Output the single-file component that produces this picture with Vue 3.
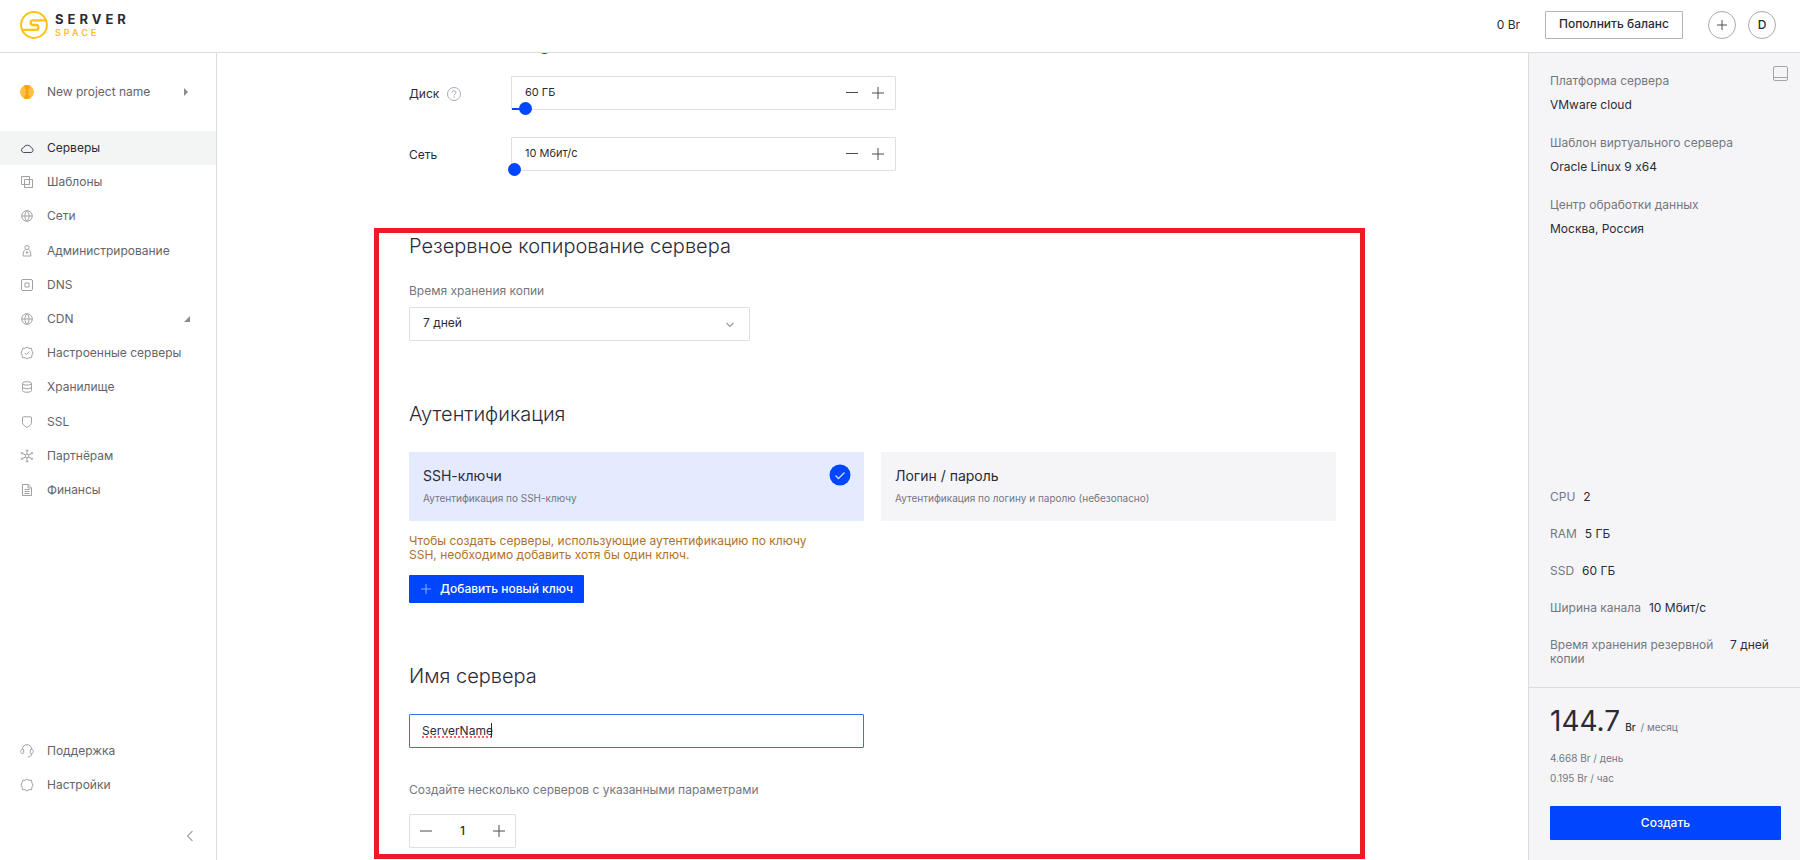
<script setup>
import { ref } from 'vue'

const icons = {
  cloud: ['M3.500 11.500h7.500a2.400 2.400 0 0 0 .3-4.700A4.200 4.200 0 0 0 3.600 6.600A2.500 2.500 0 0 0 3.500 11.500z'],
  layers: ['M1.500 1.500h8v8h-8z', 'M4.500 9.500v3h8v-8h-3', 'M4.500 4.500h5v5h-5z'],
  globe: ['M7 1.700a5.300 5.300 0 1 0 0 10.600a5.300 5.300 0 1 0 0-10.600z', 'M1.700 7h10.600', 'M7 1.700C4.300 4 4.300 10 7 12.300', 'M7 1.700C9.700 4 9.700 10 7 12.300'],
  admin: ['M7 1.500a2.100 2.100 0 1 0 0 4.200a2.100 2.100 0 1 0 0-4.200z', 'M5.500 5.500C3.500 6.700 3 9 3.200 12h7.600C11 9 10.500 6.700 8.500 5.500', 'M7 7v3M5.800 8.500h2.400'],
  dns: ['M3 1.500h8a1.500 1.500 0 0 1 1.500 1.500v8a1.500 1.500 0 0 1-1.500 1.500H3A1.500 1.500 0 0 1 1.500 11V3A1.500 1.500 0 0 1 3 1.500z', 'M5 5h4v4H5z'],
  badge: ['M7 1l1.900 1.300 2.600 0 .4 2.500L13 7l-1.100 2.200-.4 2.500-2.600 0L7 13l-1.900-1.300-2.600 0-.4-2.500L1 7l1.100-2.200.4-2.500 2.600 0z', 'M4.800 7l1.600 1.500L9.200 5.700'],
  disk: ['M2.500 3.400c0-2.200 9-2.200 9 0s-9 2.200-9 0z', 'M2.500 3.400v7.200c0 2.200 9 2.200 9 0V3.400', 'M2.500 7c0 2.200 9 2.200 9 0'],
  shield: ['M3.500 1.800h7q1 0 1 1v4.700c0 2.200-2 3.600-4.500 4.900c-2.500-1.300-4.500-2.700-4.500-4.900V2.800q0-1 1-1z'],
  partner: [
    'M7 5.200a1.800 1.800 0 1 0 0 3.600a1.800 1.800 0 1 0 0-3.600z',
    'M7 2.500v2.700M7 8.800v2.700M5.500 6L2.800 4.700M8.500 6l2.700-1.300M5.500 8L2.800 9.300M8.500 8l2.700 1.300',
    'M7 .8a.8.800 0 1 0 0 1.600a.8.800 0 1 0 0-1.600zM7 11.600a.8.800 0 1 0 0 1.600a.8.800 0 1 0 0-1.600z',
    'M2 3.400a.8.800 0 1 0 0 1.600a.8.800 0 1 0 0-1.600zM12 3.400a.8.800 0 1 0 0 1.600a.8.800 0 1 0 0-1.600zM2 9a.8.800 0 1 0 0 1.600a.8.800 0 1 0 0-1.600zM12 9a.8.800 0 1 0 0 1.600a.8.800 0 1 0 0-1.600z',
  ],
  file: ['M2.500 1.500h5.700l3.300 3.300v7.700h-9z', 'M8 1.500v3.500h3.500', 'M4.500 6.500h5M4.500 8.500h5M4.500 10.500h5'],
  support: ['M2.300 5.300C2.500 2.400 4.500.7 7 .7s4.500 1.700 4.700 4.600', 'M2.400 5.200h.5c.6 0 .8.400.8.800v2.600c0 .6-.3.900-.8.900h-.5C1.300 9.500.700 8.600.700 7.400s.6-2.200 1.700-2.200z', 'M11.600 5.200h-.5c-.6 0-.8.400-.8.800v2.600c0 .6.300.9.800.9h.5c1.100 0 1.700-.9 1.700-2.100s-.6-2.200-1.700-2.200z', 'M11.700 9.500c0 2-1.200 3.300-4 3.500'],
  gear: ['M7 1l1.900 1.300 2.600 0 .4 2.500L13 7l-1.100 2.200-.4 2.500-2.600 0L7 13l-1.900-1.300-2.600 0-.4-2.500L1 7l1.100-2.200.4-2.500 2.600 0z'],
}

const nav = [
  { icon: 'cloud', label: 'Серверы', active: true },
  { icon: 'layers', label: 'Шаблоны' },
  { icon: 'globe', label: 'Сети' },
  { icon: 'admin', label: 'Администрирование' },
  { icon: 'dns', label: 'DNS' },
  { icon: 'globe', label: 'CDN', expandable: true },
  { icon: 'badge', label: 'Настроенные серверы' },
  { icon: 'disk', label: 'Хранилище' },
  { icon: 'shield', label: 'SSL' },
  { icon: 'partner', label: 'Партнёрам' },
  { icon: 'file', label: 'Финансы' },
]
const bottomNav = [
  { icon: 'support', label: 'Поддержка' },
  { icon: 'gear', label: 'Настройки' },
]

const memory = ref(8)
const resources = ref([
  { id: 'disk', label: 'Диск', help: true, text: '60 ГБ', value: 3 },
  { id: 'net', label: 'Сеть', help: false, text: '10 Мбит/с', value: 0 },
])

const auth = ref('ssh')
const authOptions = [
  { id: 'ssh', title: 'SSH-ключи', note: 'Аутентификация по SSH-ключу' },
  { id: 'password', title: 'Логин / пароль', note: 'Аутентификация по логину и паролю (небезопасно)' },
]

const serverName = ref('ServerName')
const count = ref(1)

const platform = [
  { label: 'Платформа сервера', value: 'VMware cloud' },
  { label: 'Шаблон виртуального сервера', value: 'Oracle Linux 9 x64' },
  { label: 'Центр обработки данных', value: 'Москва, Россия' },
]
const specs = [
  { label: 'CPU', value: '2' },
  { label: 'RAM', value: '5 ГБ' },
  { label: 'SSD', value: '60 ГБ' },
  { label: 'Ширина канала', value: '10 Мбит/с' },
  { label: 'Время хранения резервной копии', value: '7 дней' },
]
</script>

<template>
  <div class="page">
    <header class="header">
      <a href="#" class="logo" aria-label="Serverspace">
        <svg class="logo-mark" viewBox="0 0 28 28" fill="none" stroke="#ffc20e">
          <circle cx="14" cy="14" r="12.900" stroke-width="2" />
          <path d="M26 9.400H13a2.300 2.300 0 0 0 0 4.600h3a2.400 2.400 0 0 1 0 4.800H2.500" stroke-width="2.300" />
        </svg>
        <span class="logo-text">
          <span class="logo-top">SERVER</span>
          <span class="logo-bottom">SPACE</span>
        </span>
      </a>
      <div class="account">
        <span class="balance">0 Br</span>
        <button type="button" class="topup">Пополнить баланс</button>
        <div class="round-buttons">
          <button type="button" class="round" aria-label="Создать">
            <svg viewBox="0 0 12 12" class="glyph"><path d="M6 1v10M1 6h10" /></svg>
          </button>
          <button type="button" class="round">D</button>
        </div>
      </div>
    </header>

    <div class="body">
      <aside class="sidebar">
        <button type="button" class="project">
          <svg class="project-icon" viewBox="0 0 14 14">
            <circle cx="7" cy="7" r="7" fill="#fdc04d" />
            <path d="M7 7L3.500 1a7 7 0 0 1 7 0zM7 7l3.500 6a7 7 0 0 1-7 0z" fill="#fba40a" />
            <circle cx="7" cy="7" r="1.800" fill="#fba40a" />
          </svg>
          <span>New project name</span>
          <svg class="project-arrow" viewBox="0 0 8 8"><path d="M2 0l4 4-4 4z" fill="#8b8b8b" /></svg>
        </button>

        <nav class="nav">
          <a v-for="item in nav" :key="item.label" href="#" class="nav-item" :class="{ active: item.active }">
            <svg class="nav-icon" viewBox="0 0 14 14">
              <path v-for="d in icons[item.icon]" :key="d" :d="d" />
            </svg>
            <span>{{ item.label }}</span>
            <svg v-if="item.expandable" class="nav-corner" viewBox="0 0 6 6"><path d="M6 0v6H0z" fill="#8b8b8b" /></svg>
          </a>
        </nav>

        <nav class="nav-bottom">
          <a v-for="item in bottomNav" :key="item.label" href="#" class="nav-item">
            <svg class="nav-icon" viewBox="0 0 14 14">
              <path v-for="d in icons[item.icon]" :key="d" :d="d" />
            </svg>
            <span>{{ item.label }}</span>
          </a>
        </nav>
        <button type="button" class="collapse" aria-label="Свернуть меню">
          <svg viewBox="0 0 8 12"><path d="M6.500 1L1.500 6l5 5" fill="none" stroke="#a6a6a6" stroke-width="1.200" /></svg>
        </button>
      </aside>

      <main class="main">
        <div class="content">
          <div class="slider-top">
            <input v-model="memory" type="range" class="range" aria-label="RAM" :style="{ '--fill': memory + '%' }" />
          </div>

          <div class="resources">
            <div v-for="r in resources" :key="r.id" class="resource">
              <label :for="r.id" class="resource-label">
                {{ r.label }}
                <svg v-if="r.help" class="help" viewBox="0 0 14 14" fill="none">
                  <circle cx="7" cy="7" r="6.500" stroke="#a9acb5" />
                  <path d="M5.200 5.500c.1-2.300 3.700-2.200 3.700 0c0 1.400-1.800 1.400-1.800 2.800" stroke="#9aa3c4" />
                  <circle cx="7.100" cy="10.100" r=".700" fill="#9aa3c4" />
                </svg>
              </label>
              <div class="resource-box">
                <input :id="r.id" v-model="r.text" type="text" class="resource-value" />
                <button type="button" class="step" aria-label="Меньше">
                  <svg viewBox="0 0 12 12" class="glyph"><path d="M0 5.500h12" /></svg>
                </button>
                <button type="button" class="step" aria-label="Больше">
                  <svg viewBox="0 0 12 12" class="glyph"><path d="M6 0v12M0 6h12" /></svg>
                </button>
                <input v-model="r.value" type="range" class="range box-range" :aria-label="r.label" :style="{ '--fill': r.value + '%' }" />
              </div>
            </div>
          </div>

          <div class="framed">
            <section class="section">
              <h2>Резервное копирование сервера</h2>
              <label for="keep" class="field-label">Время хранения копии</label>
              <div class="select-wrap">
                <select id="keep" class="select">
                  <option>7 дней</option>
                </select>
                <svg class="select-arrow" viewBox="0 0 8 6"><path d="M.5 1L4 4.500 7.500 1" fill="none" stroke="#9a9a9a" stroke-width="1.200" /></svg>
              </div>
            </section>

            <section class="section auth">
              <h2>Аутентификация</h2>
              <div class="cards">
                <button
                  v-for="o in authOptions"
                  :key="o.id"
                  type="button"
                  class="card"
                  :class="{ selected: auth === o.id }"
                  @click="auth = o.id"
                >
                  <span class="card-title">{{ o.title }}</span>
                  <span class="card-note">{{ o.note }}</span>
                  <svg v-if="auth === o.id" class="card-check" viewBox="0 0 22 22">
                    <circle cx="11" cy="11" r="10.500" fill="#0045ff" />
                    <path d="M6.500 11.500l3 3L15.500 8.500" fill="none" stroke="#cfdcff" stroke-width="1.300" />
                  </svg>
                </button>
              </div>
              <p class="warning">Чтобы создать серверы, использующие аутентификацию по ключу SSH, необходимо добавить хотя бы один ключ.</p>
              <button type="button" class="add-key">
                <svg viewBox="0 0 10 10" class="add-plus"><path d="M5 0v10M0 5h10" /></svg>
                Добавить новый ключ
              </button>
            </section>

            <section class="section name">
              <h2 id="name-title">Имя сервера</h2>
              <div class="name-wrap">
                <input v-model="serverName" type="text" class="name-input" spellcheck="false" aria-labelledby="name-title" />
                <span class="spelling" aria-hidden="true"></span>
                <span class="caret" aria-hidden="true"></span>
              </div>
              <label for="count" class="field-label count-label">Создайте несколько серверов с указанными параметрами</label>
              <div class="counter">
                <button type="button" class="step" aria-label="Меньше" @click="count = Math.max(1, count - 1)">
                  <svg viewBox="0 0 12 12" class="glyph"><path d="M0 6h12" /></svg>
                </button>
                <input id="count" v-model="count" type="text" class="count" />
                <button type="button" class="step" aria-label="Больше" @click="count++">
                  <svg viewBox="0 0 12 12" class="glyph"><path d="M6 0v12M0 6h12" /></svg>
                </button>
              </div>
            </section>
            <div class="frame" aria-hidden="true"></div>
          </div>
        </div>
      </main>

      <aside class="summary">
        <button type="button" class="dock" aria-label="Переместить панель">
          <svg viewBox="0 0 15 15"><path d="M2 .5h11q1.500 0 1.500 1.500v11q0 1.500-1.500 1.500H2Q.5 14.500.5 13V2Q.5.500 2 .500zM.5 11.500h14" fill="none" stroke="#a4a5a8" /></svg>
        </button>
        <dl class="platform">
          <div v-for="p in platform" :key="p.label">
            <dt>{{ p.label }}</dt>
            <dd>{{ p.value }}</dd>
          </div>
        </dl>
        <dl class="specs">
          <div v-for="s in specs" :key="s.label" class="spec">
            <dt>{{ s.label }}</dt>
            <dd>{{ s.value }}</dd>
          </div>
        </dl>
        <div class="price">
          <div class="price-main">
            <span class="amount">144.7</span>
            <span class="currency">Br</span>
            <span class="period">/ месяц</span>
          </div>
          <div class="price-sub">4.668 Br / день</div>
          <div class="price-sub">0.195 Br / час</div>
          <button type="button" class="create">Создать</button>
        </div>
      </aside>
    </div>
  </div>
</template>

<style>
body {
  margin: 0;
}
</style>

<style scoped>
.page {
  display: flex;
  flex-direction: column;
  height: 100vh;
  font-family: Inter, "Liberation Sans", sans-serif;
  font-size: 12px;
  line-height: 16px;
  font-variant-ligatures: no-contextual;
  color: #2b2b38;
  background: #fff;
}
.page * {
  box-sizing: border-box;
}
button,
input,
select {
  margin: 0;
  padding: 0;
  border: 0;
  background: none;
  font: inherit;
  color: inherit;
  outline: none;
}
button {
  cursor: pointer;
}
a {
  color: inherit;
  text-decoration: none;
}
svg {
  display: block;
  flex: none;
}
h2 {
  margin: 0;
  font-size: 20px;
  line-height: 30px;
  font-weight: 300;
}

.header {
  display: flex;
  flex: none;
  align-items: center;
  justify-content: space-between;
  height: 53px;
  padding: 0 24px 2px 20px;
  border-bottom: 1px solid #dcdcde;
}
.logo {
  display: flex;
  gap: 7px;
}
.logo-mark {
  width: 28px;
  height: 28px;
}
.logo-text {
  display: flex;
  flex-direction: column;
  padding-top: 2px;
}
.logo-top {
  font-size: 13px;
  line-height: 13px;
  font-weight: 700;
  letter-spacing: 4px;
}
.logo-bottom {
  font-size: 9px;
  line-height: 13px;
  font-weight: 600;
  letter-spacing: 3px;
  color: #ffc20e;
}
.account {
  display: flex;
  align-items: center;
  gap: 25px;
}
.topup {
  height: 28px;
  padding: 0 13px 2px;
  border: 1px solid #b4b4b8;
  border-radius: 1px;
  font-weight: 500;
}
.round-buttons {
  display: flex;
  gap: 12px;
}
.round {
  display: flex;
  align-items: center;
  justify-content: center;
  width: 28px;
  height: 28px;
  border: 1px solid #aaaab0;
  border-radius: 50%;
  font-weight: 500;
}
.glyph {
  width: 12px;
  height: 12px;
  fill: none;
  stroke: #4a4a55;
  stroke-width: 1;
}

.body {
  display: flex;
  flex: 1;
  min-height: 0;
}

.sidebar {
  display: flex;
  flex: none;
  flex-direction: column;
  width: 217px;
  border-right: 1px solid #dcdcde;
  color: #62656b;
}
.project,
.nav-item {
  display: flex;
  align-items: center;
  gap: 13px;
  width: 100%;
  padding: 0 26px 0 20px;
  text-align: left;
}
.project {
  height: 34px;
  margin: 22px 0;
}
.project-icon,
.nav-icon {
  width: 14px;
  height: 14px;
}
.nav-icon {
  fill: none;
  stroke: #a0a1a5;
  stroke-width: 1;
}
.project-arrow {
  width: 8px;
  height: 8px;
  margin-left: auto;
}
.nav {
  display: grid;
  grid-auto-rows: 1fr;
  min-height: 376px;
}
.nav-item {
  min-height: 34px;
}
.active {
  background: #f3f5f5;
  color: #2b2b38;
}
.active .nav-icon {
  stroke: #4c4c58;
}
.nav-corner {
  width: 6px;
  height: 6px;
  margin-left: auto;
}
.nav-bottom {
  margin-top: auto;
}
.collapse {
  align-self: flex-end;
  margin: 28px 22px 18px 0;
}
.collapse svg {
  width: 8px;
  height: 12px;
}

.main {
  flex: 1;
  min-width: 0;
  overflow: hidden;
  padding: 0 40px;
}
.content {
  max-width: 927px;
  margin: 0 auto;
}
.range {
  display: block;
  height: 13px;
  appearance: none;
  background: linear-gradient(#0045ff, #0045ff) 4px center / var(--fill) 2px no-repeat;
}
.range::-webkit-slider-thumb {
  appearance: none;
  width: 13px;
  height: 13px;
  border-radius: 50%;
  background: #0045ff;
}
.slider-top {
  display: flow-root;
  height: 2px;
  padding-left: 99px;
}
.slider-top .range {
  width: 391px;
  margin-top: -12px;
}
.resources {
  display: grid;
  gap: 27px;
  margin-top: 21px;
}
.resource {
  display: grid;
  grid-template-columns: 102px 385px;
  align-items: center;
}
.resource-label {
  display: flex;
  align-items: center;
  gap: 8px;
  padding-top: 2px;
}
.help {
  width: 14px;
  height: 14px;
}
.resource-box {
  position: relative;
  display: flex;
  align-items: center;
  gap: 4px;
  height: 34px;
  padding: 0 6px 0 13px;
  border: 1px solid #dfdfe2;
  border-radius: 1px;
}
.resource-value {
  flex: 1;
  min-width: 0;
  padding-bottom: 2px;
  font-size: 11px;
}
.step {
  display: flex;
  align-items: center;
  justify-content: center;
  width: 22px;
  height: 32px;
}
.box-range {
  position: absolute;
  left: -4px;
  right: -4px;
  bottom: -6px;
  width: auto;
  min-width: 391px;
}

.framed {
  position: relative;
  margin-top: 60px;
}
.frame {
  position: absolute;
  inset: -3px -29px -11px -35px;
  border: 5px solid #ed1c24;
  pointer-events: none;
}
.field-label {
  display: block;
  margin: 22px 0 8px;
  color: #747780;
}
.select-wrap {
  position: relative;
  width: 341px;
  height: 34px;
}
.select {
  width: 100%;
  height: 34px;
  padding: 0 13px 2px;
  appearance: none;
  border: 1px solid #dfdfe2;
  border-radius: 1px;
}
.select-arrow {
  position: absolute;
  top: 15px;
  right: 16px;
  width: 8px;
  height: 6px;
}
.auth {
  margin-top: 58px;
}
.cards {
  display: grid;
  grid-template-columns: 1fr 1fr;
  gap: 17px;
  margin-top: 23px;
}
.card {
  position: relative;
  display: flex;
  flex-direction: column;
  gap: 7px;
  height: 69px;
  padding: 16px 14px;
  border-radius: 1px;
  background: #f5f5f8;
  text-align: left;
}
.selected {
  background: #e4eaff;
}
.card-title {
  font-size: 14px;
}
.card-note {
  font-size: 10px;
  line-height: 14px;
  color: #747780;
}
.card-check {
  position: absolute;
  top: 12px;
  right: 13px;
  width: 22px;
  height: 22px;
}
.warning {
  max-width: 420px;
  margin: 13px 0;
  line-height: 14px;
  color: #b0722a;
}
.add-key {
  display: flex;
  align-items: center;
  gap: 9px;
  height: 28px;
  padding: 0 11px 0 12px;
  border-radius: 1px;
  background: #0045ff;
  color: #fff;
  font-weight: 500;
}
.add-plus {
  width: 10px;
  height: 10px;
  stroke: #8fb0ff;
}
.name {
  margin-top: 58px;
}
.name-wrap {
  position: relative;
  max-width: 455px;
  margin-top: 23px;
}
.name-input {
  display: block;
  width: 100%;
  height: 34px;
  padding: 0 12px 2px;
  border: 1px solid #3d6ff5;
  border-radius: 1px;
}
.spelling {
  position: absolute;
  left: 13px;
  bottom: 10px;
  width: 70px;
  border-bottom: 2px dotted #ff6464;
}
.caret {
  position: absolute;
  left: 82px;
  top: 9px;
  width: 1px;
  height: 14px;
  background: #2b2b38;
}
.count-label {
  margin: 34px 0 16px;
}
.counter {
  display: flex;
  align-items: center;
  justify-content: space-between;
  width: 107px;
  height: 34px;
  padding: 0 5px;
  border: 1px solid #dfdfe2;
  border-radius: 1px;
}
.count {
  width: 30px;
  text-align: center;
  font-weight: 500;
}

.summary {
  position: relative;
  display: flex;
  flex: none;
  flex-direction: column;
  width: 272px;
  border-left: 1px solid #dcdcde;
  background: #f5f5f8;
}
.dock {
  position: absolute;
  top: 13px;
  right: 12px;
}
.dock svg {
  width: 15px;
  height: 15px;
}
dl,
dd {
  margin: 0;
}
dt {
  color: #747780;
}
.platform {
  display: grid;
  gap: 22px;
  padding: 20px 21px 0;
}
.platform dt {
  margin-bottom: 8px;
}
.specs {
  display: grid;
  gap: 23px;
  margin-top: auto;
  padding: 0 21px 21px;
  line-height: 14px;
}
.spec {
  display: flex;
  gap: 8px;
}
.spec dt {
  max-width: 172px;
}
.spec dd {
  white-space: nowrap;
}
.price {
  padding: 17px 19px 20px 21px;
  border-top: 1px solid #dcdcde;
}
.price-main {
  display: flex;
  align-items: baseline;
  gap: 5px;
  margin-bottom: 7px;
  font-size: 10px;
  line-height: 32px;
}
.amount {
  font-size: 28px;
}
.currency {
  font-weight: 500;
}
.period {
  color: #747780;
}
.price-sub {
  margin-bottom: 4px;
  font-size: 10px;
  color: #747780;
}
.create {
  width: 100%;
  height: 34px;
  margin-top: 16px;
  border-radius: 1px;
  background: #0045ff;
  color: #fff;
  font-weight: 500;
}
</style>
